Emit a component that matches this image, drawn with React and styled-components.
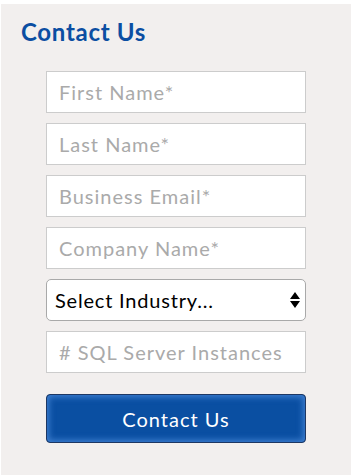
import React from "react";
import styled, { createGlobalStyle } from "styled-components";

const GlobalStyle = createGlobalStyle`
  html, body {
    margin: 0;
    padding: 0;
    background: #ffffff;
  }
  * {
    box-sizing: border-box;
  }
`;

const Panel = styled.div`
  margin: 4px 0 0 1px;
  width: 350px;
  height: 471px;
  background: #f2efee;
  padding: 14px 0 0 20px;
  font-family: "Lato", "Open Sans", sans-serif;
`;

const Title = styled.h2`
  margin: 0;
  font-size: 24px;
  font-weight: 700;
  letter-spacing: 0.7px;
  color: #0b4ea2;
  line-height: 28px;
`;

const Form = styled.form`
  display: flex;
  flex-direction: column;
  gap: 10px;
  width: 260px;
  margin: 25px 0 0 25px;
`;

const Input = styled.input`
  height: 42px;
  width: 100%;
  border: 1px solid #cccccc;
  border-radius: 0;
  background: #ffffff;
  padding: 0 12px;
  font-family: inherit;
  font-size: 20px;
  letter-spacing: 1px;
  color: #333;
  outline: none;
  &::placeholder {
    color: #aaaaaa;
  }
`;

const SelectWrap = styled.div`
  position: relative;
  height: 42px;
`;

const Select = styled.select`
  appearance: none;
  -webkit-appearance: none;
  width: 100%;
  height: 42px;
  border: 1px solid #a9a9a9;
  border-radius: 5px;
  background: #ffffff;
  padding: 0 30px 0 8px;
  font-family: inherit;
  font-size: 20px;
  letter-spacing: 0.8px;
  color: #000;
  outline: none;
`;

const Arrows = styled.svg`
  position: absolute;
  right: 6px;
  top: 13px;
  pointer-events: none;
`;

const Button = styled.button`
  margin-top: 11px;
  height: 49px;
  width: 100%;
  border: 1px solid #1d3763;
  border-radius: 4px;
  background: #0a4fa2;
  box-shadow: inset 0 0 6px 2px #3f7fd0;
  color: #ffffff;
  font-family: inherit;
  font-size: 20px;
  letter-spacing: 1px;
  cursor: pointer;
`;

function App() {
  return (
    <>
      <GlobalStyle />
      <Panel>
        <Title>Contact Us</Title>
        <Form>
          <Input type="text" placeholder="First Name*" />
          <Input type="text" placeholder="Last Name*" />
          <Input type="email" placeholder="Business Email*" />
          <Input type="text" placeholder="Company Name*" />
          <SelectWrap>
            <Select defaultValue="">
              <option value="">Select Industry...</option>
              <option value="finance">Finance</option>
              <option value="health">Healthcare</option>
              <option value="tech">Technology</option>
            </Select>
            <Arrows width="10" height="16" viewBox="0 0 10 16">
              <path d="M5 0 L10 7 L0 7 Z M0 9 L10 9 L5 16 Z" fill="#000" />
            </Arrows>
          </SelectWrap>
          <Input type="text" placeholder="# SQL Server Instances" />
          <Button type="button">Contact Us</Button>
        </Form>
      </Panel>
    </>
  );
}

export default App;
